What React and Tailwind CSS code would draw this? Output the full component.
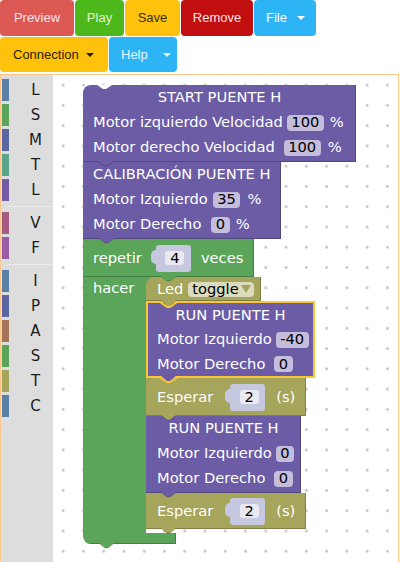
import React from "react";

const purple = "bg-[#6b5ca5]";
const green = "bg-[#5ba55b]";
const olive = "bg-[#a5a55b]";
const edge = "shadow-[inset_-1px_-1px_0_rgba(0,0,0,0.22)]";

const toolbox = [
  [
    ["L", "bg-[#5b80a5]"],
    ["S", "bg-[#5ba55b]"],
    ["M", "bg-[#5b67a5]"],
    ["T", "bg-[#5ba58c]"],
    ["L", "bg-[#745ba5]"],
  ],
  [
    ["V", "bg-[#a55b80]"],
    ["F", "bg-[#995ba5]"],
  ],
  [
    ["I", "bg-[#5b80a5]"],
    ["P", "bg-[#5b67a5]"],
    ["A", "bg-[#a5745b]"],
    ["S", "bg-[#5ba55b]"],
    ["T", "bg-[#a5a55b]"],
    ["C", "bg-[#5b80a5]"],
  ],
];

const Caret = ({ className = "" }) => (
  <span className={`h-0 w-0 border-x-[4px] border-t-[4px] border-x-transparent border-t-current ${className}`} />
);

const Btn = ({ className, children }) => (
  <button className={`flex h-full items-center rounded-[4px] ${className}`}>{children}</button>
);

// little puzzle tab hanging under a block
const Tab = ({ fill, className = "" }) => (
  <svg
    width="15"
    height="5"
    viewBox="0 0 15 5"
    className={`absolute z-10 overflow-visible ${className}`}
  >
    <polygon points="0,0 6,5 9,5 15,0" fill={fill} />
    <polyline points="0.5,1 6,5 9,5 14.5,1" fill="none" stroke="rgba(0,0,0,0.22)" strokeWidth="1" />
  </svg>
);

const Field = ({ children, className = "" }) => (
  <span
    className={`flex h-[16px] items-center justify-center rounded-[4px] bg-[#c4bddb] px-[4.5px] text-black ${className}`}
  >
    {children}
  </span>
);

const Puzzle = ({ children, className = "" }) => (
  <div
    className={`relative flex h-[27px] w-[35px] items-center justify-center rounded-[3px] bg-[#c5c8df] pl-[3px] ${className}`}
  >
    <span className="absolute left-[-5px] top-[5px] h-[14px] w-[6px] rounded-l-[5px] bg-[#c5c8df]" />
    <span className="flex h-[14px] w-[19px] items-center justify-center rounded-[3px] bg-[#e8e9f1] text-black">
      {children}
    </span>
  </div>
);

const Dropdown = ({ children, className = "" }) => (
  <div className={`flex h-[15px] w-[66px] items-center rounded-[4px] bg-[#dbdbbd] pl-[4px] text-black ${className}`}>
    {children}
    <svg className="ml-[2px]" width="10" height="8" viewBox="0 0 10 8">
      <polygon points="0,0 10,0 5,8" fill="#a5a55b" />
    </svg>
  </div>
);

const Toolbar = () => (
  <div className="flex flex-col gap-px font-['Liberation_Sans',sans-serif] text-[13px]">
    <div className="flex h-[36px] gap-px">
      <Btn className="w-[74px] justify-center bg-[#dc5853] text-[#fbe2ee]">Preview</Btn>
      <Btn className="w-[49px] justify-center bg-[#4db81b] text-[#e2f7d4]">Play</Btn>
      <Btn className="w-[55px] justify-center bg-[#fec20d] text-[#3a3000]">Save</Btn>
      <Btn className="w-[72px] justify-center bg-[#c10e0e] text-[#fde4e4]">Remove</Btn>
      <Btn className="w-[62px] gap-[10px] bg-[#2db4f4] pl-[12px] text-white">
        File
        <Caret />
      </Btn>
    </div>
    <div className="flex h-[35px] gap-px">
      <Btn className="w-[108px] gap-[7px] bg-[#fec20d] pl-[13px] text-[#2a2200]">
        Connection
        <Caret />
      </Btn>
      <Btn className="w-[68px] gap-[15px] bg-[#2db4f4] pl-[12px] text-[#eaf7ff]">
        Help
        <Caret />
      </Btn>
    </div>
  </div>
);

const Toolbox = () => (
  <div className="flex w-[52px] shrink-0 flex-col gap-[3px] bg-[#dddddd] pt-[4px]">
    {toolbox.map((group, gi) => (
      <React.Fragment key={gi}>
        {gi > 0 && <div className="my-[2px] ml-[6px] h-px bg-[#ececec]" />}
        {group.map(([label, color], i) => (
          <div key={i} className="flex h-[22px] items-center">
            <span className={`ml-px h-full w-[7px] ${color}`} />
            <span className="flex-1 pl-[9px] text-center text-[15px] text-[#1c1c1c]">{label}</span>
          </div>
        ))}
      </React.Fragment>
    ))}
  </div>
);

const Workspace = () => (
  <div className="relative flex-1 overflow-hidden bg-white bg-[radial-gradient(circle,#c6c6c6_1.1px,transparent_1.7px)] bg-[length:20.28px_20.28px] pl-[30px] pt-[10px]">
    <div className="flex flex-col items-start whitespace-pre text-[14.67px] leading-none text-white">
      {/* START PUENTE H */}
      <div className={`relative w-[273px] rounded-tl-[8px] pb-[2px] ${purple} ${edge}`}>
        <svg width="15" height="5" viewBox="0 0 15 5" className="absolute left-[14px] top-0">
          <polygon points="0,0 6,4 9,4 15,0" fill="#ffffff" />
        </svg>
        <div className="flex h-[25px] items-center justify-center">START PUENTE H</div>
        <div className="flex h-[25px] items-center pl-[10px]">
          <span>Motor izquierdo Velocidad</span>
          <Field className="ml-[4px]">100</Field>
          <span className="ml-[6px]">%</span>
        </div>
        <div className="flex h-[25px] items-center pl-[10px]">
          <span>Motor derecho Velocidad</span>
          <Field className="ml-[9px]">100</Field>
          <span className="ml-[7px]">%</span>
        </div>
        <Tab fill="#6b5ca5" className="left-[15px] top-[calc(100%-1px)]" />
      </div>

      {/* CALIBRACION */}
      <div className={`relative w-[198px] pb-[2px] ${purple} ${edge}`}>
        <div className="flex h-[25px] items-center pl-[10px]">CALIBRACIÓN PUENTE H</div>
        <div className="flex h-[25px] items-center pl-[10px]">
          <span>Motor Izquierdo</span>
          <Field className="ml-[5px]">35</Field>
          <span className="ml-[7px]">%</span>
        </div>
        <div className="flex h-[25px] items-center pl-[10px]">
          <span>Motor Derecho</span>
          <Field className="ml-[10px]">0</Field>
          <span className="ml-[6px]">%</span>
        </div>
        <Tab fill="#6b5ca5" className="left-[16px] top-[calc(100%-1px)]" />
      </div>

      {/* repetir */}
      <div className="relative flex flex-col">
        <div className={`relative flex h-[38px] w-[171px] items-center pl-[10px] ${green} ${edge}`}>
          <span>repetir</span>
          <Puzzle className="ml-[14px]">4</Puzzle>
          <span className="ml-[10px]">veces</span>
          <Tab fill="#5ba55b" className="left-[78px] top-[calc(100%-1px)]" />
        </div>
        <div className="flex">
          <div className={`w-[63px] pl-[10px] ${green}`}>
            <div className="flex h-[22px] items-center">hacer</div>
          </div>
          <div className="flex flex-col items-start pb-[4px]">
            <div className={green}>
              <div className={`relative flex h-[24px] w-[115px] items-center rounded-tl-[8px] pl-[11px] ${olive} ${edge}`}>
                <span>Led</span>
                <Dropdown className="ml-[5px]">toggle</Dropdown>
                <Tab fill="#a5a55b" className="left-[15px] top-[calc(100%-1px)]" />
              </div>
            </div>

            {/* selected block */}
            <div className={`relative w-[169px] border-2 border-[#fcc537] ${purple}`}>
              <svg width="19" height="8" viewBox="0 0 19 8" className="absolute left-[11px] top-[-2px] z-20 overflow-visible">
                <polygon points="2,0 8,5 11,5 17,0" fill="#a5a55b" />
                <polyline points="1,1 8,6 11,6 18,1" fill="none" stroke="#fcc537" strokeWidth="2" />
              </svg>
              <div className="flex h-[24px] items-center justify-center">RUN PUENTE H</div>
              <div className="flex h-[25px] items-center pl-[9px]">
                <span>Motor Izquierdo</span>
                <Field className="ml-[4px]">-40</Field>
              </div>
              <div className="flex h-[24px] items-center pl-[9px]">
                <span>Motor Derecho</span>
                <Field className="ml-[9px]">0</Field>
              </div>
              <svg width="19" height="8" viewBox="0 0 19 8" className="absolute left-[11px] top-full z-20 overflow-visible">
                <polygon points="1,-1 8,5 11,5 18,-1" fill="#6b5ca5" />
                <polyline points="0,1 8,6 11,6 19,1" fill="none" stroke="#fcc537" strokeWidth="2" />
              </svg>
            </div>

            <div className={`relative flex h-[38px] w-[160px] items-center pl-[11px] ${olive} ${edge}`}>
              <span>Esperar</span>
              <Puzzle className="ml-[17px]">2</Puzzle>
              <span className="ml-[11px]">(s)</span>
              <Tab fill="#a5a55b" className="left-[15px] top-[calc(100%-1px)]" />
            </div>

            <div className={`relative w-[155px] pb-[2px] ${purple} ${edge}`}>
              <div className="flex h-[25px] items-center justify-center">RUN PUENTE H</div>
              <div className="flex h-[25px] items-center pl-[11px]">
                <span>Motor Izquierdo</span>
                <Field className="ml-[4px]">0</Field>
              </div>
              <div className="flex h-[25px] items-center pl-[11px]">
                <span>Motor Derecho</span>
                <Field className="ml-[9px]">0</Field>
              </div>
              <Tab fill="#6b5ca5" className="left-[15px] top-[calc(100%-1px)]" />
            </div>

            <div className={`relative flex h-[36px] w-[160px] items-center pl-[11px] ${olive} ${edge}`}>
              <span>Esperar</span>
              <Puzzle className="ml-[17px]">2</Puzzle>
              <span className="ml-[11px]">(s)</span>
              <Tab fill="#a5a55b" className="left-[15px] top-[calc(100%-1px)]" />
            </div>
          </div>
        </div>
        <div className={`h-[11px] w-[93px] rounded-bl-[8px] ${green} ${edge}`} />
        <Tab fill="#5ba55b" className="left-[16px] top-[calc(100%-1px)]" />
      </div>
    </div>
  </div>
);

export default function App() {
  return (
    <div className="h-[562px] w-[400px] overflow-hidden bg-white font-['DejaVu_Sans',sans-serif]">
      <Toolbar />
      <div className="mt-[2px] flex h-[488px] w-[399px] border-x border-t border-[#fdc68b]">
        <Toolbox />
        <Workspace />
      </div>
    </div>
  );
}
